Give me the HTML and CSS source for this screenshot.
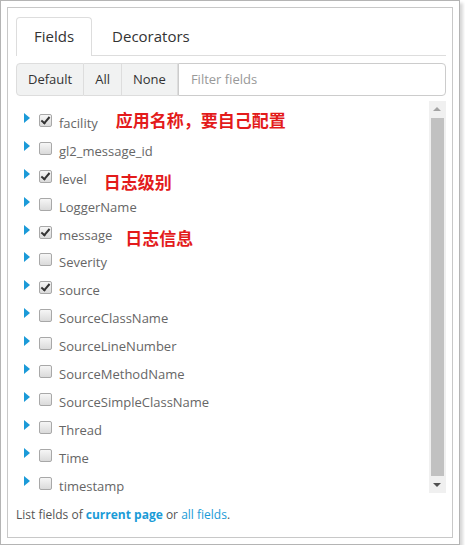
FILE: index.html
```html
<!DOCTYPE html>
<html>
<head>
<meta charset="utf-8">
<link rel="stylesheet" href="styles.css">
</head>
<body>
<div class="frame">
  <div class="panel">
    <div class="tabs">
      <div class="tab active">Fields</div>
      <div class="tab">Decorators</div>
    </div>
    <div class="toolbar">
      <div class="btn">Default</div>
      <div class="btn">All</div>
      <div class="btn">None</div>
      <div class="filter">Filter fields</div>
    </div>
    <div class="listarea">
      <div class="list">
        <div class="row"><span class="tri"></span><span class="cb on"></span><span class="label">facility</span><span class="note n1">应用名称，要自己配置</span></div>
        <div class="row"><span class="tri"></span><span class="cb"></span><span class="label">gl2_message_id</span></div>
        <div class="row"><span class="tri"></span><span class="cb on"></span><span class="label">level</span><span class="note n2">日志级别</span></div>
        <div class="row"><span class="tri"></span><span class="cb"></span><span class="label">LoggerName</span></div>
        <div class="row"><span class="tri"></span><span class="cb on"></span><span class="label">message</span><span class="note n3">日志信息</span></div>
        <div class="row"><span class="tri"></span><span class="cb"></span><span class="label">Severity</span></div>
        <div class="row"><span class="tri"></span><span class="cb on"></span><span class="label">source</span></div>
        <div class="row"><span class="tri"></span><span class="cb"></span><span class="label">SourceClassName</span></div>
        <div class="row"><span class="tri"></span><span class="cb"></span><span class="label">SourceLineNumber</span></div>
        <div class="row"><span class="tri"></span><span class="cb"></span><span class="label">SourceMethodName</span></div>
        <div class="row"><span class="tri"></span><span class="cb"></span><span class="label">SourceSimpleClassName</span></div>
        <div class="row"><span class="tri"></span><span class="cb"></span><span class="label">Thread</span></div>
        <div class="row"><span class="tri"></span><span class="cb"></span><span class="label">Time</span></div>
        <div class="row"><span class="tri"></span><span class="cb"></span><span class="label">timestamp</span></div>
      </div>
      <div class="scrollbar">
        <div class="arrow up"></div>
        <div class="track"><div class="thumb"></div></div>
        <div class="arrow down"></div>
      </div>
    </div>
    <div class="footer">List fields of <span class="strong">current page</span> or <span class="link">all fields</span>.</div>
  </div>
</div>
</body>
</html>
```
FILE: styles.css
```css
html, body {
  margin: 0;
  padding: 0;
  background: #fff;
}
body {
  font-family: "Open Sans", "Noto Sans", sans-serif;
  color: #333;
}
.frame {
  width: 458px;
  height: 543px;
  border: 1px solid #b4b4b4;
  padding: 6px;
  box-sizing: border-box;
  width: 460px;
  height: 545px;
  box-shadow: 3px 3px 3px #d8d8d8;
}
.panel {
  border: 1px solid #c8c8c8;
  height: 100%;
  box-sizing: border-box;
  padding: 9px 6px 0 8px;
  display: flex;
  flex-direction: column;
}
.tabs {
  display: flex;
  border-bottom: 1px solid #dddddd;
  height: 38px;
  box-sizing: content-box;
}
.tab {
  font-size: 15px;
  line-height: 21px;
  padding: 8px 17px;
  border: 1px solid transparent;
  border-bottom: none;
  border-radius: 4px 4px 0 0;
  margin-right: 2px;
  color: #333;
  height: 21px;
}
.tab.active {
  border-color: #dddddd;
  background: #fff;
  margin-bottom: -1px;
  height: 22px;
}
.toolbar {
  display: flex;
  margin-top: 7px;
  height: 33px;
  box-sizing: border-box;
}
.btn {
  font-size: 13px;
  line-height: 31px;
  padding: 0 11px;
  background: #f1f2f2;
  border: 1px solid #dddddd;
  border-left: none;
  color: #333;
}
.btn:first-child {
  border-left: 1px solid #dddddd;
  border-radius: 4px 0 0 4px;
}
.filter {
  flex: 1;
  font-size: 13px;
  line-height: 31px;
  padding: 0 12px;
  color: #999;
  border: 1px solid #cccccc;
  border-left: 1px solid #cccccc;
  border-radius: 0 4px 4px 0;
}
.listarea {
  display: flex;
  margin-top: 5px;
  height: 392px;
}
.list {
  flex: 1;
  padding-top: 8px;
  padding-left: 8px;
}
.row {
  display: flex;
  align-items: flex-start;
  height: 27.9px;
  white-space: nowrap;
}
.tri {
  width: 0;
  height: 0;
  border-left: 6px solid #1b9ad8;
  border-top: 5px solid transparent;
  border-bottom: 5px solid transparent;
  margin-top: 4px;
}
.cb {
  width: 11px;
  height: 11px;
  border: 1px solid #a8a8a8;
  border-radius: 2px;
  background: linear-gradient(#f6f6f6, #dadada);
  margin-left: 9px;
  margin-top: 5px;
  position: relative;
}
.cb.on::after {
  content: "";
  position: absolute;
  left: 3px;
  top: 0px;
  width: 3px;
  height: 7px;
  border-right: 2px solid #333;
  border-bottom: 2px solid #333;
  transform: rotate(40deg);
}
.label {
  font-size: 13px;
  line-height: 28px;
  color: #666;
  margin-left: 7px;
}
.note {
  font-family: "Noto Sans CJK SC", sans-serif;
  font-weight: bold;
  font-size: 17px;
  color: #e31b1b;
  line-height: 22px;
}
.n1 { margin-left: 18px; margin-top: 0px; }
.n2 { margin-left: 17px; margin-top: 6px; }
.n3 { margin-left: 13px; margin-top: 6px; }
.scrollbar {
  width: 17px;
  background: #f0f0f0;
  display: flex;
  flex-direction: column;
}
.arrow {
  height: 17px;
  position: relative;
}
.arrow.up::after, .arrow.down::after {
  content: "";
  position: absolute;
  left: 4px;
  width: 0;
  height: 0;
  border-left: 4px solid transparent;
  border-right: 4px solid transparent;
}
.arrow.up::after {
  top: 6px;
  border-bottom: 4px solid #a3a3a3;
}
.arrow.down::after {
  top: 7px;
  border-top: 4px solid #505050;
}
.track {
  flex: 1;
  padding: 0 2px;
}
.thumb {
  background: #c1c1c1;
  height: 100%;
  margin-bottom: 3px;
}
.footer {
  font-size: 12px;
  color: #555;
  margin-top: 12px;
  line-height: 20px;
}
.strong {
  font-weight: bold;
  color: #1a9bd7;
}
.link {
  color: #1a9bd7;
}
```
